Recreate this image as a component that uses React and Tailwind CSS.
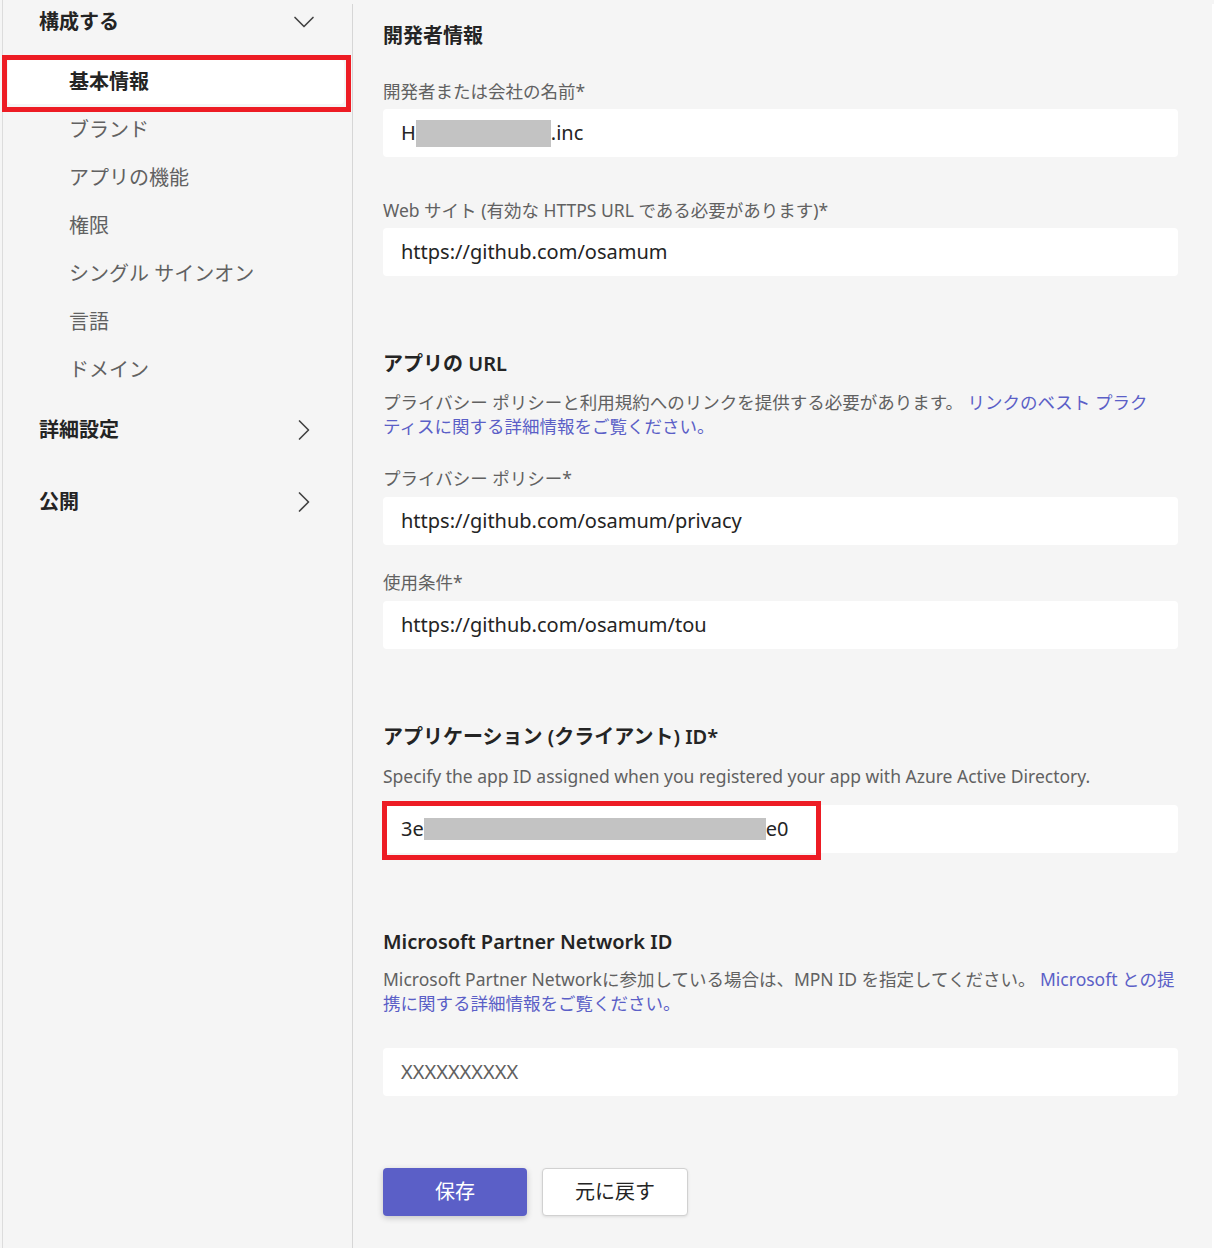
import { ChevronDown, ChevronRight } from "lucide-react"

const font = "font-['Noto_Sans','Noto_Sans_CJK_JP',sans-serif]"

function NavItem({ label, active }) {
  if (active) {
    return (
      <div className="relative h-[50px] pt-[4px] pl-[5px] pr-[8px]">
        <div className="h-[44px] rounded-[4px] bg-white flex items-center pl-[61px] text-[20px] font-bold text-[#242424]">
          {label}
        </div>
        {/* annotation box */}
        <div className="absolute left-[-1px] top-[-1px] w-[349px] h-[57px] border-[5px] border-[#ed1c24]" />
      </div>
    )
  }
  return (
    <div className="h-[48px] flex items-center pl-[66px] text-[20px] text-[#616161]">
      {label}
    </div>
  )
}

function Section({ label, open, className = "" }) {
  return (
    <div className={`flex items-center justify-between pl-[36px] pr-[30px] h-[28px] ${className}`}>
      <span className="text-[20px] font-bold text-[#242424]">{label}</span>
      {open ? (
        <ChevronDown size={36} strokeWidth={1.1} className="text-[#424242] shrink-0" />
      ) : (
        <ChevronRight size={36} strokeWidth={1.1} className="text-[#424242] shrink-0" />
      )}
    </div>
  )
}

function Label({ children, className = "" }) {
  return <div className={`text-[17.5px] leading-[24px] text-[#616161] ${className}`}>{children}</div>
}

function Field({ children, placeholder, className = "" }) {
  return (
    <div className={`h-[48px] rounded-[4px] bg-white flex items-center px-[18px] text-[20px] ${placeholder ? "text-[#616161]" : "text-[#242424]"} ${className}`}>
      {children}
    </div>
  )
}

function Heading({ children, className = "" }) {
  return <div className={`text-[20px] leading-[28px] font-semibold text-[#242424] ${className}`}>{children}</div>
}

export default function App() {
  const basics = ["ブランド", "アプリの機能", "権限", "シングル サインオン", "言語", "ドメイン"]

  return (
    <div className={`${font} w-[1214px] h-[1248px] bg-[#f5f5f5] flex overflow-hidden`}>
      <div className="w-[2px] shrink-0" />
      <div className="w-[1px] h-full bg-[#dcdcdc] shrink-0" />

      {/* sidebar */}
      <aside className="w-[350px] mt-[4px] border-r border-r-[#d6d6d6] pt-[4px] shrink-0">
        <Section label="構成する" open />
        <div className="mt-[20px]">
          <NavItem label="基本情報" active />
          {basics.map((b) => (
            <NavItem key={b} label={b} />
          ))}
        </div>
        <Section label="詳細設定" className="mt-[22px]" />
        <Section label="公開" className="mt-[44px]" />
      </aside>

      {/* main */}
      <main className="flex-1 pl-[30px] pr-[34px] pt-[22px]">
        <Heading className="font-bold">開発者情報</Heading>

        <Label className="mt-[29px]">開発者または会社の名前*</Label>
        <Field className="mt-[6px]">
          H<span className="inline-block w-[135px] h-[27px] bg-[#c3c3c3]" />.inc
        </Field>

        <Label className="mt-[41px]">Web サイト (有効な HTTPS URL である必要があります)*</Label>
        <Field className="mt-[6px]">https://github.com/osamum</Field>

        <Heading className="mt-[74px]">アプリの URL</Heading>
        <Label className="mt-[12px] w-[770px]">
          プライバシー ポリシーと利用規約へのリンクを提供する必要があります。{" "}
          <span className="text-[#5b5fc7]">リンクのベスト プラクティスに関する詳細情報をご覧ください。</span>
        </Label>

        <Label className="mt-[28px]">プライバシー ポリシー*</Label>
        <Field className="mt-[7px]">https://github.com/osamum/privacy</Field>

        <Label className="mt-[25px]">使用条件*</Label>
        <Field className="mt-[7px]">https://github.com/osamum/tou</Field>

        <Heading className="mt-[74px]">アプリケーション (クライアント) ID*</Heading>
        <Label className="mt-[13px]">Specify the app ID assigned when you registered your app with Azure Active Directory.</Label>
        <div className="relative mt-[17px]">
          <Field>
            3e<span className="inline-block w-[342px] h-[22px] bg-[#c3c3c3]" />e0
          </Field>
          <div className="absolute left-[-1px] top-[-4px] w-[439px] h-[59px] border-[5px] border-[#ed1c24]" />
        </div>

        <Heading className="mt-[75px]">Microsoft Partner Network ID</Heading>
        <Label className="mt-[11px]">
          Microsoft Partner Networkに参加している場合は、MPN ID を指定してください。{" "}
          <span className="text-[#5b5fc7]">Microsoft との提携に関する詳細情報をご覧ください。</span>
        </Label>
        <Field placeholder className="mt-[33px]">XXXXXXXXXX</Field>

        <div className="mt-[72px] flex gap-[15px]">
          <button className="w-[144px] h-[48px] rounded-[4px] bg-[#5b5fc7] text-white text-[20px] shadow-[0_2px_6px_rgba(0,0,0,0.2)]">
            保存
          </button>
          <button className="w-[146px] h-[48px] rounded-[4px] bg-white border border-[#d1d1d1] text-[#242424] text-[20px] shadow-[0_1px_3px_rgba(0,0,0,0.1)]">
            元に戻す
          </button>
        </div>
      </main>
      <div className="w-[2px] mt-[4px] bg-white shrink-0" />
    </div>
  )
}
